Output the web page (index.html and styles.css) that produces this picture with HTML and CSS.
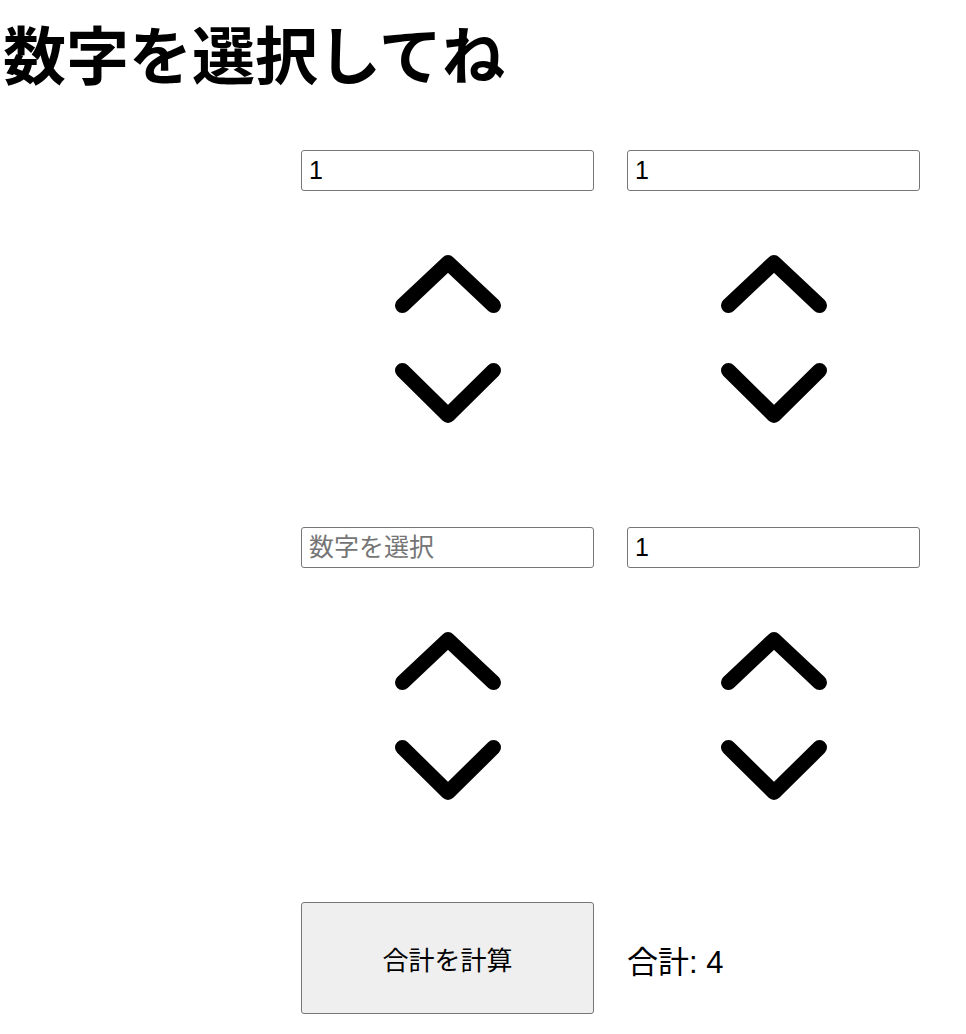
FILE: index.html
```html
<!DOCTYPE html>
<html lang="ja">
<head>
<meta charset="utf-8">
<title>数字を選択してね</title>
<link rel="stylesheet" href="styles.css">
</head>
<body>
<h1 class="title">数字を選択してね</h1>
<main class="board">
  <div class="cell">
    <input class="num" type="text" value="1">
    <button class="arrow" aria-label="up"><svg viewBox="0 0 120 94" width="120" height="94"><polyline points="14.5,60.5 60,17.6 105.5,60.5"/></svg></button>
    <button class="arrow" aria-label="down"><svg viewBox="0 0 120 94" width="120" height="94"><polyline points="14.5,31.5 60,76.4 105.5,31.5"/></svg></button>
  </div>
  <div class="cell">
    <input class="num" type="text" value="1">
    <button class="arrow" aria-label="up"><svg viewBox="0 0 120 94" width="120" height="94"><polyline points="14.5,60.5 60,17.6 105.5,60.5"/></svg></button>
    <button class="arrow" aria-label="down"><svg viewBox="0 0 120 94" width="120" height="94"><polyline points="14.5,31.5 60,76.4 105.5,31.5"/></svg></button>
  </div>
  <div class="cell">
    <input class="num" type="text" placeholder="数字を選択">
    <button class="arrow" aria-label="up"><svg viewBox="0 0 120 94" width="120" height="94"><polyline points="14.5,60.5 60,17.6 105.5,60.5"/></svg></button>
    <button class="arrow" aria-label="down"><svg viewBox="0 0 120 94" width="120" height="94"><polyline points="14.5,31.5 60,76.4 105.5,31.5"/></svg></button>
  </div>
  <div class="cell">
    <input class="num" type="text" value="1">
    <button class="arrow" aria-label="up"><svg viewBox="0 0 120 94" width="120" height="94"><polyline points="14.5,60.5 60,17.6 105.5,60.5"/></svg></button>
    <button class="arrow" aria-label="down"><svg viewBox="0 0 120 94" width="120" height="94"><polyline points="14.5,31.5 60,76.4 105.5,31.5"/></svg></button>
  </div>
  <button class="calc">合計を計算</button>
  <div class="sum">合計: 4</div>
</main>
</body>
</html>
```

FILE: styles.css
```css
html, body {
  margin: 0;
  padding: 0;
  background: #ffffff;
}

body {
  font-family: Arial, "Liberation Sans", "Noto Sans CJK JP", sans-serif;
  color: #000000;
}

.title {
  margin: 0;
  padding: 0 0 0 3px;
  font-family: "Noto Sans CJK JP", sans-serif;
  font-weight: 700;
  font-size: 63px;
  line-height: 104px;
  letter-spacing: 0;
}

.board {
  display: grid;
  grid-template-columns: 293px 293px;
  column-gap: 33px;
  row-gap: 94px;
  margin: 46px 0 0 301px;
  align-items: center;
}

.cell {
  display: flex;
  flex-direction: column;
  align-items: center;
}

.num {
  box-sizing: border-box;
  width: 293px;
  height: 41px;
  margin: 0 0 54px 0;
  padding: 0 7px;
  border: 1px solid #767676;
  border-radius: 3px;
  font-family: Arial, "Liberation Sans", "Noto Sans CJK JP", sans-serif;
  font-size: 25px;
  color: #000000;
  background: #ffffff;
}

.num::placeholder {
  color: #757575;
}

.arrow {
  display: block;
  width: 120px;
  height: 94px;
  margin: 0;
  padding: 0;
  border: 0;
  background: transparent;
}

.arrow svg {
  display: block;
}

.arrow polyline {
  fill: none;
  stroke: #000000;
  stroke-width: 15;
  stroke-linecap: round;
  stroke-linejoin: round;
}

.calc {
  box-sizing: border-box;
  width: 293px;
  height: 112px;
  margin: -2px 0 0 0;
  border: 1px solid #767676;
  border-radius: 3px;
  background: #efefef;
  font-family: "Noto Sans CJK JP", sans-serif;
  font-weight: 400;
  font-size: 26px;
  color: #000000;
}

.sum {
  font-family: Arial, "Liberation Sans", "Noto Sans CJK JP", sans-serif;
  font-size: 31px;
}
```
